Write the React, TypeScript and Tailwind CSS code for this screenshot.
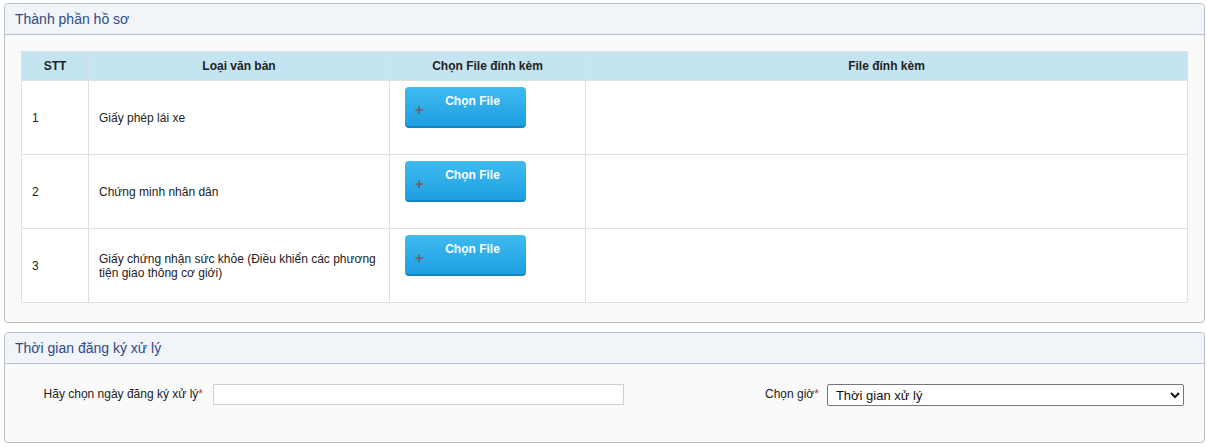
const docs = [
  { stt: 1, name: "Giấy phép lái xe" },
  { stt: 2, name: "Chứng minh nhân dân" },
  { stt: 3, name: "Giấy chứng nhận sức khỏe (Điều khiển các phương tiện giao thông cơ giới)" },
];

function Panel({ title, children }: { title: string; children: React.ReactNode }) {
  return (
    <div className="ml-[4px] mr-[2px] rounded-[4px] border border-[#b9c1cc] bg-[#fafafa]">
      <div className="h-[31px] rounded-t-[4px] border-b border-[#b9c1cc] bg-[#f1f4f9] px-[10px] text-[14px] leading-[31px] text-[#2e4a88]">
        {title}
      </div>
      {children}
    </div>
  );
}

function ChooseFileButton() {
  return (
    <button className="relative h-[41px] w-[121px] rounded-[4px] border-b-2 border-[#1483bf] bg-gradient-to-b from-[#3fbbf0] to-[#1c9fe2] text-[12px] font-bold text-white">
      <span className="absolute left-[10px] top-[15px] text-[15px] font-bold leading-none text-[#7a5862]">+</span>
      <span className="absolute left-[14px] right-0 top-[7px] text-center leading-[14px]">Chọn File</span>
    </button>
  );
}

export default function App() {
  return (
    <div className="bg-white pt-[3px] font-['Liberation_Sans',Arial,sans-serif] text-[12px] text-[#222]">
      <Panel title="Thành phần hồ sơ">
        <div className="px-[16px] pb-[19px] pt-[16px]">
          <table className="w-full border-collapse bg-white">
            <thead>
              <tr className="h-[29px] bg-[#c4e4f1] font-bold">
                <th className="w-[67px] border border-[#dbe2e6] text-center">STT</th>
                <th className="w-[301px] border border-[#dbe2e6] text-center">Loại văn bản</th>
                <th className="w-[196px] border border-[#dbe2e6] text-center">Chọn File đính kèm</th>
                <th className="border border-[#dbe2e6] text-center">File đính kèm</th>
              </tr>
            </thead>
            <tbody>
              {docs.map((d) => (
                <tr key={d.stt} className="h-[74px]">
                  <td className="border border-[#dbe2e6] px-[10px] align-middle">{d.stt}</td>
                  <td className="border border-[#dbe2e6] px-[10px] align-middle leading-[14px]">{d.name}</td>
                  <td className="border border-[#dbe2e6] px-[15px] pt-[6px] align-top">
                    <ChooseFileButton />
                  </td>
                  <td className="border border-[#dbe2e6]"></td>
                </tr>
              ))}
            </tbody>
          </table>
        </div>
      </Panel>

      <div className="h-[9px]" />

      <Panel title="Thời gian đăng ký xử lý">
        <div className="flex h-[78px] items-start pt-[20px]">
          <label className="w-[200px] pr-[2px] text-right leading-[21px]">
            Hãy chọn ngày đăng ký xử lý<span className="text-[#c0392b]">*</span>
          </label>
          <input
            type="text"
            className="ml-[8px] h-[21px] w-[411px] border border-[#cfcfcf] bg-white"
          />
          <label className="ml-[141px] text-right leading-[21px]">
            Chọn giờ<span className="text-[#c0392b]">*</span>
          </label>
          <select className="ml-[8px] h-[22px] w-[357px] rounded-[2px] border border-[#767676] bg-white px-[4px] text-[13px] text-[#111]">
            <option>Thời gian xử lý</option>
          </select>
        </div>
      </Panel>
    </div>
  );
}
